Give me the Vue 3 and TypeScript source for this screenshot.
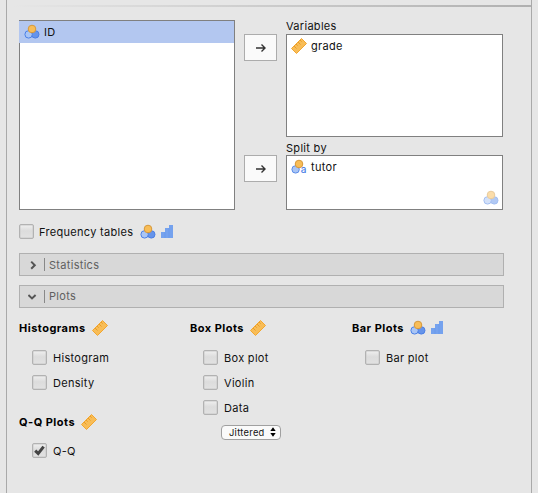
<script setup lang="ts">
import { ref } from 'vue'

interface Option {
  label: string
  checked: boolean
}
interface Group {
  title: string
  icons: string[]
  options: Option[]
}

const sections = ref([
  { title: 'Statistics', open: false },
  { title: 'Plots', open: true },
])
const frequency = ref<Option>({ label: 'Frequency tables', checked: false })
const columns = ref<Group[][]>([
  [
    {
      title: 'Histograms',
      icons: ['ruler'],
      options: [
        { label: 'Histogram', checked: false },
        { label: 'Density', checked: false },
      ],
    },
    { title: 'Q-Q Plots', icons: ['ruler'], options: [{ label: 'Q-Q', checked: true }] },
  ],
  [
    {
      title: 'Box Plots',
      icons: ['ruler'],
      options: [
        { label: 'Box plot', checked: false },
        { label: 'Violin', checked: false },
        { label: 'Data', checked: false },
      ],
    },
  ],
  [{ title: 'Bar Plots', icons: ['nominal', 'bars'], options: [{ label: 'Bar plot', checked: false }] }],
])
</script>

<template>
  <svg class="defs" aria-hidden="true">
    <symbol id="nominal" viewBox="0 0 16 16">
      <circle cx="11.3" cy="10.4" r="3.7" fill="#6694ea" stroke="#4b80e6" />
      <circle cx="4.6" cy="10.4" r="3.7" fill="#a9c5f5" stroke="#4b80e6" />
      <circle cx="8" cy="5" r="3.8" fill="#f8bd57" stroke="#d6983a" />
    </symbol>
    <symbol id="ruler" viewBox="0 0 16 16">
      <path d="M10.5.5 15.5 5.5 5.5 15.5.5 10.5Z" fill="#f8bd57" stroke="#f2a630" stroke-linejoin="round" />
      <path d="m3 8 2.5 2.5M5 6l1.7 1.7M7 4l2.5 2.5M9 2l1.7 1.7" fill="none" stroke="#e99c28" />
    </symbol>
    <symbol id="bars" viewBox="0 0 16 16">
      <path d="M1 14V8h4v6ZM5 14V4h4v10ZM9 14V1h4v13Z" fill="#75a2ee" />
      <path d="M5 14V8M9 14V4" stroke="#5f91ea" stroke-width=".5" />
    </symbol>
  </svg>

  <main class="panel">
    <div class="rule"></div>
    <div class="assign">
      <div class="list source">
        <div class="item selected"><svg class="icon"><use href="#nominal" /></svg><span>ID</span></div>
      </div>
      <div class="arrows">
        <button v-for="n in 2" :key="n" class="move" type="button">
          <svg viewBox="0 0 12 10"><path d="M1 5h9M6.5 1.5 10 5 6.5 8.5" /></svg>
        </button>
      </div>
      <div class="targets">
        <div class="label">Variables</div>
        <div class="list variables">
          <div class="item"><svg class="icon"><use href="#ruler" /></svg><span>grade</span></div>
        </div>
        <div class="label split-label">Split by</div>
        <div class="list split">
          <div class="item">
            <svg class="icon" viewBox="0 0 16 16">
              <circle cx="4.6" cy="10.4" r="3.7" fill="#a9c5f5" stroke="#5a8ce9" />
              <circle cx="8" cy="5" r="3.8" fill="#f8bd57" stroke="#d6983a" />
              <text x="9.7" y="14.3" class="letter">a</text>
            </svg>
            <span>tutor</span>
          </div>
          <svg class="icon hint"><use href="#nominal" /></svg>
        </div>
      </div>
    </div>

    <label class="option frequency">
      <input v-model="frequency.checked" type="checkbox" />
      <span>{{ frequency.label }}</span>
      <svg class="icon"><use href="#nominal" /></svg>
      <svg class="icon"><use href="#bars" /></svg>
    </label>

    <div v-for="s in sections" :key="s.title" class="section">
      <svg class="chevron" viewBox="0 0 10 10">
        <path :d="s.open ? 'M.4 3.1 4 6.4 7.6 3.1' : 'M3.2 1.6 6.8 5.2 3.2 8.8'" />
      </svg>
      <i class="divider"></i>
      <span>{{ s.title }}</span>
    </div>

    <div class="columns">
      <div v-for="(col, c) in columns" :key="c" class="column">
        <section v-for="g in col" :key="g.title" class="group">
          <h2>
            <span>{{ g.title }}</span>
            <svg v-for="i in g.icons" :key="i" class="icon"><use :href="'#' + i" /></svg>
          </h2>
          <label v-for="o in g.options" :key="o.label" class="option">
            <span class="box">
              <input v-model="o.checked" type="checkbox" />
              <svg v-if="o.checked" class="tick" viewBox="0 0 15 15"><path d="m3.2 7.6 3 3L11.6 3.6" /></svg>
            </span>
            <span>{{ o.label }}</span>
          </label>
          <div v-if="g.title === 'Box Plots'" class="select">
            <span>Jittered</span>
            <svg viewBox="0 0 6 10"><path d="M3 .3 5.7 4H.3ZM3 9.7 5.7 6H.3Z" /></svg>
          </div>
        </section>
      </div>
    </div>
  </main>
</template>

<style>
body {
  background: #e6e6e6;
}
</style>

<style scoped>
.defs {
  position: absolute;
  width: 0;
  height: 0;
}
.letter {
  font: 500 10px Inter, sans-serif;
  letter-spacing: 0;
  fill: #4b80e6;
}
.panel {
  box-sizing: border-box;
  width: 526px;
  height: 493px;
  margin-left: 6px;
  padding: 5px 0 0 12px;
  border: solid #a9a9a9;
  border-width: 0 1px;
  overflow: hidden;
  color: #111;
  font: 11px/15px Inter, sans-serif;
  letter-spacing: 0.3px;
}
.rule {
  height: 2px;
  margin-left: -6px;
  background: linear-gradient(90deg, transparent, #b0b0b0);
}
.assign {
  display: flex;
  height: 203px;
}
.list {
  box-sizing: border-box;
  border: 1px solid #808080;
  background: #fff;
}
.source {
  width: 216px;
  height: 190px;
  margin-top: 13px;
}
.item {
  display: flex;
  align-items: center;
  height: 22px;
  padding-left: 4px;
  gap: 4px;
}
.selected {
  margin-left: -1px;
  padding-left: 5px;
  background: #b3c7f0;
}
.icon {
  flex: none;
  width: 16px;
  height: 16px;
  overflow: visible;
}
.arrows {
  display: flex;
  flex-direction: column;
  gap: 94px;
  margin: 27px 9px 0;
}
.move {
  box-sizing: border-box;
  display: flex;
  align-items: center;
  justify-content: center;
  width: 33px;
  height: 27px;
  padding: 0;
  border: 1px solid #acacac;
  background: #fafafa;
}
.move svg {
  width: 12px;
  height: 10px;
  margin-top: 1px;
}
.move path {
  fill: none;
  stroke: #333;
  stroke-width: 1.4;
}
.targets {
  width: 217px;
  padding-top: 12px;
}
.label {
  height: 15px;
}
.variables {
  height: 103px;
}
.split-label {
  height: 14px;
  padding-top: 4px;
}
.split {
  position: relative;
  height: 55px;
}
.hint {
  position: absolute;
  right: 3px;
  bottom: 3px;
  opacity: 0.5;
}
.option {
  display: flex;
  align-items: center;
  height: 15px;
}
input {
  box-sizing: border-box;
  display: block;
  flex: none;
  appearance: none;
  width: 15px;
  height: 15px;
  margin: 0;
  border: 1px solid #b2b2b2;
  border-radius: 2px;
  background: linear-gradient(#efefef, #dcdcdc 45%, #e2e2e2);
  box-shadow: inset 0 0 0 0.5px #c8c8c8;
}
.option > span:not(.box) {
  margin-left: 6px;
  padding-top: 2px;
}
.option.frequency {
  margin: 14px 0;
}
.option.frequency > span {
  margin-left: 5px;
}
.frequency .icon {
  margin-left: 7px;
}
.frequency .icon + .icon {
  margin-left: 4px;
}
.section {
  box-sizing: border-box;
  display: flex;
  align-items: center;
  width: 485px;
  height: 23px;
  margin-top: 9px;
  padding-left: 8px;
  border: 1px solid #b0b0b0;
  background: #d8d8d8;
  color: #606060;
}
.section span {
  padding-top: 1px;
}
.section + .section span {
  padding-top: 0;
}
.frequency + .section {
  margin-top: 0;
}
.chevron {
  width: 10px;
  height: 10px;
}
.chevron path {
  fill: none;
  stroke: #555;
  stroke-width: 2;
}
.divider {
  width: 1px;
  height: 13px;
  margin: 0 4px 0 6px;
  background: #888;
}
.columns {
  display: grid;
  grid-template-columns: 171px 162px 1fr;
  margin-top: 12px;
}
h2 {
  display: flex;
  align-items: center;
  gap: 4px;
  height: 16px;
  margin: 0 0 14px;
  color: #000;
  font-size: 11px;
  font-weight: 700;
  letter-spacing: 0.47px;
}
h2 span {
  margin-right: 2px;
}
.group .option {
  margin: 0 0 10px 13px;
}
.group + .group {
  margin-top: 24px;
}
.group + .group h2 {
  margin-bottom: 13px;
}
.box {
  position: relative;
}
.tick {
  position: absolute;
  inset: 0;
  width: 15px;
  height: 15px;
}
.tick path {
  fill: none;
  stroke: #444;
  stroke-width: 3;
}
.select {
  box-sizing: border-box;
  display: flex;
  align-items: center;
  justify-content: space-between;
  width: 60px;
  height: 15px;
  margin-left: 31px;
  padding: 0 4px 0 7px;
  border: 1px solid #a0a0a0;
  border-radius: 4px;
  background: #fafafa;
  font-size: 9.3px;
}
.select svg {
  width: 6px;
  height: 10px;
  margin-bottom: 2px;
}
</style>
